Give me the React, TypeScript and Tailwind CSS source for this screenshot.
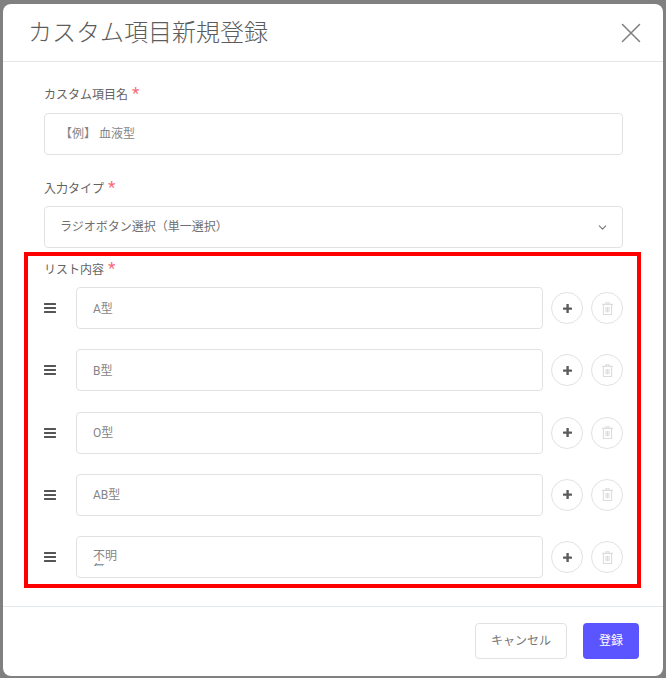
import React from "react";
import { ChevronDown, X } from "lucide-react";

const font = "font-['Roboto','Noto_Sans_CJK_JP',sans-serif]";

function Label({ text, className = "" }: { text: string; className?: string }) {
  return (
    <div className={`flex items-start text-[12px] leading-[18px] text-[#636363] ${className}`}>
      <span>{text}</span>
      <span className="ml-[4px] text-[17px] leading-[14px] text-[#f76a7c]">*</span>
    </div>
  );
}

function Row({ value, clipped }: { value: string; clipped?: boolean }) {
  return (
    <div className="flex h-[42px] items-center">
      <svg width="14" height="12" viewBox="0 0 14 12" className="ml-[-1px] mr-[19px] shrink-0" fill="#555">
        <rect x="1" y="1" width="12" height="2" rx="0.5" />
        <rect x="1" y="5" width="12" height="2" rx="0.5" />
        <rect x="1" y="9" width="12" height="2" rx="0.5" />
      </svg>
      <div className="flex h-[42px] w-[467px] items-center overflow-hidden rounded-[4px] border border-[#e2e2e2] bg-white pl-[16px] text-[12px] leading-[18px] text-[#858585]">
        {clipped ? (
          <div className="mt-[12px] h-[17px] self-start overflow-hidden leading-[14px]">
            {value}
            <br />
            無
          </div>
        ) : (
          <span className="pt-[1px]">{value}</span>
        )}
      </div>
      <button className="ml-[8px] flex h-[32px] w-[32px] shrink-0 items-center justify-center rounded-full border border-[#e2e2e2] bg-white">
        <svg width="9" height="9" viewBox="0 0 9 9" fill="#5c5c5c">
          <rect x="3.4" y="0" width="2.4" height="9" rx="0.5" />
          <rect x="0" y="3.4" width="9" height="2.4" rx="0.5" />
        </svg>
      </button>
      <button className="ml-[8px] flex h-[32px] w-[32px] shrink-0 items-center justify-center rounded-full border border-[#e2e2e2] bg-white">
        <svg width="11" height="13" viewBox="0 0 10 12" fill="none" stroke="#dcdcdc" strokeWidth="1">
          <path d="M0 2.2h10M3.5 2V.7h3V2" />
          <path d="M1.2 2.5v9h7.6v-9" />
          <path d="M3.6 4.5v5M5 4.5v5M6.4 4.5v5" />
        </svg>
      </button>
    </div>
  );
}

export default function App() {
  return (
    <div className={`${font} h-[678px] w-[666px] overflow-hidden bg-[#808080] pb-[2px] pl-[3px] pr-[3px] pt-[4px]`}>
      <div className="flex h-[672px] flex-col overflow-hidden rounded-[8px] bg-white">
        <header className="flex h-[58px] shrink-0 items-center justify-between border-b border-[#e6e6e6] pl-[25px] pr-[15px]">
          <h1 className="text-[24px] font-light leading-[28px] text-[#5c5c5c]">カスタム項目新規登録</h1>
          <X size={34} strokeWidth={1.1} className="text-[#808080]" />
        </header>
        <main className="flex-1 pl-[41px] pr-[40px] pt-[24px]">
          <Label text="カスタム項目名" className="mb-[9px]" />
          <div className="flex h-[42px] items-center rounded-[4px] border border-[#e2e2e2] bg-white pl-[15px] text-[12px] text-[#858585]">
            【例】 血液型
          </div>
          <Label text="入力タイプ" className="mb-[8px] mt-[25px]" />
          <div className="flex h-[42px] items-center justify-between rounded-[4px] border border-[#e2e2e2] bg-white pl-[15px] pr-[13px] text-[12px] text-[#707070]">
            <span>ラジオボタン選択（単一選択）</span>
            <ChevronDown size={13} strokeWidth={2} className="text-[#777]" />
          </div>
          <section className="-ml-[20px] -mr-[18px] mt-[4px] h-[336px] border-4 border-[#ff0000] pl-[16px] pr-[14px] pt-[5px]">
            <Label text="リスト内容" className="mb-[8px]" />
            <div className="flex flex-col gap-[20.25px]">
              <Row value="A型" />
              <Row value="B型" />
              <Row value="O型" />
              <Row value="AB型" />
              <Row value="不明" clipped />
            </div>
          </section>
        </main>
        <footer className="flex h-[70px] shrink-0 items-start justify-end gap-[16px] border-t border-[#e3e8ec] pr-[24px] pt-[16px]">
          <button className="h-[36px] w-[92px] rounded-[4px] border border-[#e2e2e2] bg-white text-[12px] text-[#777]">キャンセル</button>
          <button className="h-[36px] w-[56px] rounded-[4px] bg-[#5b55ff] text-[12px] text-white">登録</button>
        </footer>
      </div>
    </div>
  );
}
